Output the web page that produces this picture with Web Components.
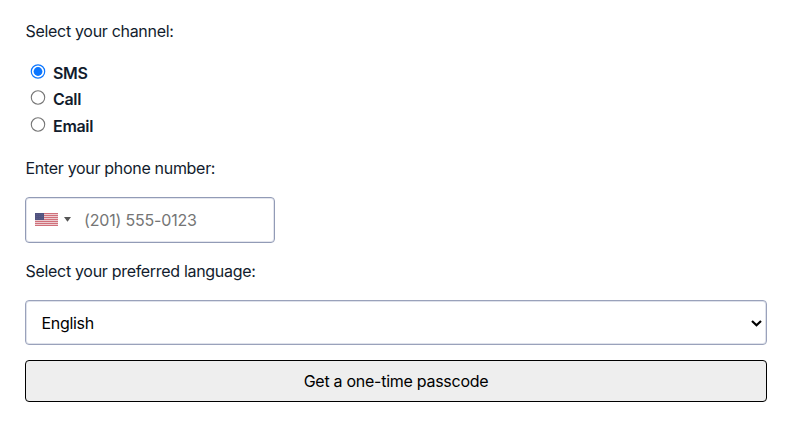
<!DOCTYPE html>
<html lang="en">
<head>
<meta charset="utf-8">
<title>One-time passcode</title>
<style>
	body {
		margin: 0;
		background: #fff;
		color: #121c2d;
		font: 16px/24px Inter, "Liberation Sans", sans-serif;
		letter-spacing: -.31px;
	}
</style>
</head>
<body>
<passcode-form>
	<form-field label="Select your channel:">
		<radio-option checked>SMS</radio-option>
		<radio-option>Call</radio-option>
		<radio-option>Email</radio-option>
	</form-field>
	<form-field label="Enter your phone number:">
		<phone-input placeholder="(201) 555-0123"></phone-input>
	</form-field>
	<form-field label="Select your preferred language:">
		<language-select>English</language-select>
	</form-field>
	<submit-button>Get a one-time passcode</submit-button>
</passcode-form>

<script>
	(function() {
		class BaseElement extends HTMLElement {
			constructor() {
				super();
				this.attachShadow({mode: 'open'});
			}

			connectedCallback() {
				this.shadowRoot.innerHTML = this.render();
			}
		}

		class PasscodeForm extends BaseElement {
			render() {
				return `
					<style>
						:host {
							display: flex;
							flex-direction: column;
							gap: 16.5px;
							padding: 19px 33px 0 25px;
						}
					</style>
					<slot></slot>
				`;
			}
		}

		class FormField extends BaseElement {
			render() {
				return `
					<style>
						:host { display: flex; flex-direction: column; gap: 17px; }
						p { margin: 0; padding-left: .5px; }
						div { display: flex; flex-direction: column; }
					</style>
					<p>${this.getAttribute('label')}</p>
					<div><slot></slot></div>
				`;
			}
		}

		class RadioOption extends BaseElement {
			render() {
				return `
					<style>
						:host { display: block; height: 26.4px; }
						label {
							display: flex;
							align-items: flex-start;
							gap: 7px;
							padding-left: 5px;
							font-weight: 600;
							line-height: 26px;
						}
						svg { display: block; margin-top: 4px; }
					</style>
					<label>
						<svg width="16" height="15" viewBox="0 0 16 15">
							${this.hasAttribute('checked')
								? '<circle cx="8" cy="7.5" r="6.7" fill="#fff" stroke="#0b76ff" stroke-width="1.2"/><circle cx="8" cy="7.5" r="4.4" fill="#0b76ff"/>'
								: '<circle cx="8" cy="7.5" r="6.7" fill="#fff" stroke="#767676" stroke-width="1.1"/>'}
						</svg>
						<span><slot></slot></span>
					</label>
				`;
			}
		}

		class PhoneInput extends BaseElement {
			render() {
				return `
					<style>
						:host {
							display: flex;
							align-items: center;
							box-sizing: border-box;
							width: 250px;
							height: 46px;
							padding-left: 9px;
							border: 1px solid #929bb6;
							border-radius: 4px;
							box-shadow: inset 0 0 0 1px #e4e6ee;
						}
						.arrow { margin: 0 13px 0 6px; }
						input {
							flex: 1;
							min-width: 0;
							padding: 0;
							border: 0;
							outline: 0;
							background: none;
							font: inherit;
							letter-spacing: -.18px;
						}
						input::placeholder { color: #757575; }
					</style>
					<svg width="23" height="13" viewBox="0 0 23 13">
						<path fill="#eccbd0" d="M0 0h23v13H0z"/>
						<path stroke="#d0707a" d="M0 .5h23M0 2.5h23M0 4.5h23M0 6.5h23M0 8.5h23M0 10.5h23M0 12.5h23"/>
						<path fill="#50527f" d="M0 0h9v7H0z"/>
						<path stroke="#74769a" stroke-width=".5" stroke-dasharray=".6 1" d="M1 1.5h7M1 3.5h7M1 5.5h7"/>
					</svg>
					<svg class="arrow" width="7" height="5" viewBox="0 0 7 5"><path fill="#555" d="M0 0h7L3.5 4.8z"/></svg>
					<input type="tel" placeholder="${this.getAttribute('placeholder')}">
				`;
			}
		}

		class LanguageSelect extends BaseElement {
			render() {
				return `
					<style>
						:host {
							display: flex;
							align-items: center;
							justify-content: space-between;
							box-sizing: border-box;
							height: 45px;
							padding: 1px 4px 0 15.5px;
							border: 1px solid #9aa2bb;
							border-radius: 4px;
							box-shadow: inset 0 0 0 1px #dfe2eb;
							color: #000;
						}
					</style>
					<span><slot></slot></span>
					<svg width="11" height="7" viewBox="0 0 11 7"><path fill="none" stroke="#000" stroke-width="2.2" d="M1 1l4.5 4.3L10 1"/></svg>
				`;
			}
		}

		class SubmitButton extends BaseElement {
			render() {
				return `
					<style>
						:host { display: flex; margin-top: -1.5px; }
						button {
							flex: 1;
							height: 42px;
							padding: 0;
							border: 1px solid #000;
							border-radius: 4px;
							background: #eee;
							color: #000;
							font: inherit;
							letter-spacing: -.27px;
						}
					</style>
					<button type="button"><slot></slot></button>
				`;
			}
		}

		customElements.define('passcode-form', PasscodeForm);
		customElements.define('form-field', FormField);
		customElements.define('radio-option', RadioOption);
		customElements.define('phone-input', PhoneInput);
		customElements.define('language-select', LanguageSelect);
		customElements.define('submit-button', SubmitButton);
	})();
</script>
</body>
</html>
